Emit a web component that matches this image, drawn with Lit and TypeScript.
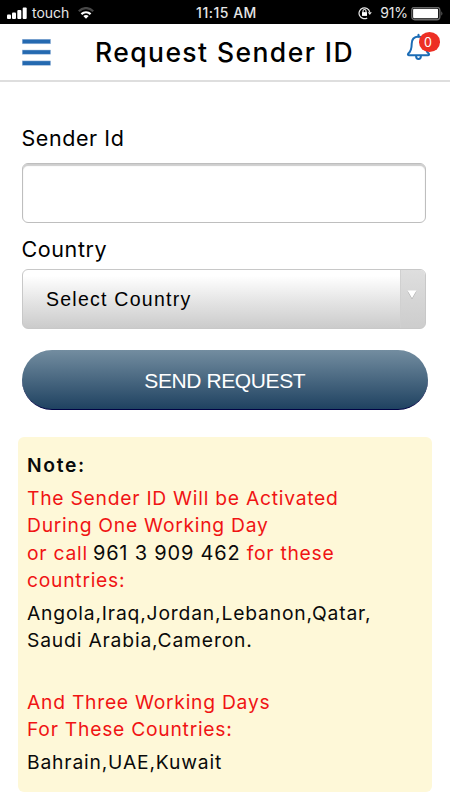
import { LitElement, html, css } from "lit";
import { customElement } from "lit/decorators.js";

@customElement("status-bar")
class StatusBar extends LitElement {
  static styles = css`
    :host { display: grid; grid-template-columns: 1fr auto 1fr; align-items: center; height: 24px; background: #000; color: #e6e6e6;
      font: 14px/24px Inter, "Liberation Sans", sans-serif; box-sizing: border-box; padding: 0 6px 0 7px; white-space: nowrap; }
    .left, .right { display: flex; align-items: center; padding-top: 1px; }
    .right { justify-content: flex-end; }
    .carrier { margin-left: 5px; letter-spacing: 0; padding-bottom: 1px; }
    .wifi { margin-left: 8.5px; }
    .time { font-weight: 500; letter-spacing: 0.5px; font-size: 14px; padding: 0 0 1px 2px; }
    .percent { margin: 0 3px 0 8px; letter-spacing: -0.1px; padding-bottom: 1px; }
    svg { display: block; }
  `;
  render() {
    return html`
      <div class="left">
        <svg width="20" height="13" viewBox="0 0 20 13" fill="#fff">
          <rect x="0" y="7.5" width="4" height="4.5" rx="1" /><rect x="5" y="5.5" width="4" height="6.5" rx="1" />
          <rect x="10.3" y="3" width="4" height="9" rx="1" /><rect x="15.7" y="0.5" width="4" height="11.5" rx="1" />
        </svg>
        <span class="carrier">touch</span>
        <svg class="wifi" width="16" height="13" viewBox="0 0 16 13" fill="none" stroke-width="2.2">
          <path d="M.8 4.2C5 0 11 0 15.2 4.2" stroke="#484848" />
          <path d="M3.4 7.1C6 4.6 10 4.6 12.6 7.1" stroke="#fff" />
          <path d="M5.300 9.100Q8 6.900 10.700 9.100L8 11.800Z" fill="#fff" />
        </svg>
      </div>
      <div class="time">11:15 AM</div>
      <div class="right">
        <svg width="14" height="13" viewBox="0 0 14 13" fill="none" stroke="#e8e8e8" stroke-width="1.2">
          <path d="M9.2 10.9A5.4 5.4 0 1 1 11.7 5" />
          <path d="M9.8 5.2h4l-2 2.8z" fill="#e8e8e8" stroke="none" />
          <rect x="4" y="5.1" width="5" height="3.8" fill="#fff" stroke="none" />
          <path d="M5 5.1V4a1.5 1.5 0 0 1 3 0v1.1" />
        </svg>
        <span class="percent">91%</span>
        <svg width="33" height="14" viewBox="0 0 33 14">
          <rect x=".8" y=".3" width="28" height="12.4" rx="3" fill="none" stroke="#686868" stroke-width="1.4" />
          <rect x="2.1" y="1.7" width="25" height="9.6" rx="1.2" fill="#fff" />
          <path d="M30.400 4.200q2 2.300 0 4.600z" fill="#686868" />
        </svg>
      </div>`;
  }
}

@customElement("page-header")
class PageHeader extends LitElement {
  static styles = css`
    :host { display: flex; align-items: flex-start; height: 58px; box-sizing: border-box; border-bottom: 2px solid #dedede; padding: 0 10px 0 21.5px; }
    .menu { display: block; margin-top: 15px; }
    h1 { margin: 8px 0 0 44.5px; font: 450 26.5px/40px Inter, "Liberation Sans", sans-serif; letter-spacing: 1.42px; white-space: nowrap; color: #000; }
    .alerts { position: relative; margin-left: auto; width: 34px; height: 32px; margin-top: 7px; }
    .bell { display: block; margin-top: 2px; }
    .badge { position: absolute; left: 12.5px; top: 1px; width: 21px; height: 19.5px; border-radius: 50%; background: #ed2f24; color: #fff;
      font: 12.5px/22px Inter, sans-serif; text-align: center; text-indent: -2px; }
  `;
  render() {
    return html`
      <svg class="menu" width="29" height="27" viewBox="0 0 29 27" fill="#2469b0" stroke="#a9c1e0" stroke-width=".5">
        <rect x=".2" y=".2" width="28.4" height="4.6" /><rect x=".2" y="11" width="28.4" height="4.2" /><rect x=".2" y="21.9" width="28.4" height="4.4" />
      </svg>
      <h1>Request Sender ID</h1>
      <div class="alerts">
        <svg class="bell" width="26" height="28" viewBox="0 0 26 28" fill="none" stroke="#1b6cb5" stroke-width="2" stroke-linejoin="round" stroke-linecap="round">
          <path d="M12.5 3.4C8.1 3.6 5.7 6.600 5.700 10.700C5.700 15.700 4.700 18.600 2.300 20.600Q1.300 22.200 2.800 22.300H22.200Q23.700 22.200 22.700 20.600C20.300 18.600 19.300 15.700 19.300 10.700C19.300 6.600 16.900 3.600 12.500 3.400Z" />
          <path d="M12.500 3.400V1.800" /><path d="M10.100 23a2.400 2.900 0 0 0 4.800 0" />
        </svg>
        <span class="badge">0</span>
      </div>`;
  }
}

@customElement("request-form")
class RequestForm extends LitElement {
  static styles = css`
    :host { display: flex; flex-direction: column; padding: 42px 21.5px 0; font-family: Inter, "Liberation Sans", sans-serif; color: #000; }
    label { display: block; font-size: 21.5px; line-height: 28px; white-space: nowrap; }
    .sender { letter-spacing: 0.56px; }
    .country { letter-spacing: 0.6px; margin-top: 12px; }
    .field { box-sizing: border-box; width: 404px; height: 60px; margin-top: 11px; border: 1px solid #bebebe; border-radius: 6px; background: #fff; box-shadow: inset 0 2px 1px #cecece; }
    .select { box-sizing: border-box; display: flex; width: 404px; height: 60px; margin-top: 6px; border: 1px solid #c8c8c8; border-radius: 6px; overflow: hidden;
      background: linear-gradient(#fff 10%, #e4e4e4 55%, #cbcbcb); }
    .value { flex: 1; padding-left: 23.5px; font: 19.5px/58px "Liberation Sans", sans-serif; letter-spacing: 1.25px; }
    .arrow { width: 25px; border-left: 1px solid #d0d0d0; background: linear-gradient(#dedede, #cdcdcd); display: flex; justify-content: center; padding: 19.5px 2px 0 0; box-sizing: border-box; }
    .arrow svg { display: block; }
    button { width: 406.5px; height: 60px; margin-top: 21px; border: 0; border-bottom: 1px solid #000245; border-radius: 30px; padding: 2px 0 0;
      background: linear-gradient(#738da0, #1f4261); color: #fff; font: 21px/57px "Liberation Sans", sans-serif; letter-spacing: -0.4px; }
  `;
  render() {
    return html`
      <label class="sender">Sender Id</label>
      <div class="field"></div>
      <label class="country">Country</label>
      <div class="select">
        <span class="value">Select Country</span>
        <span class="arrow"><svg width="10" height="10" viewBox="0 0 10 10"><path d="M.5 1.600h9L5 9.200z" fill="#aaa" /><path d="M.5.600h9L5 8.200z" fill="#fff" /></svg></span>
      </div>
      <button>SEND REQUEST</button>`;
  }
}

@customElement("activation-note")
class ActivationNote extends LitElement {
  static styles = css`
    :host { display: block; box-sizing: border-box; width: 414px; height: 354.5px; margin: 27px 0 0 18px; padding: 15px 9px 0 9px; border-radius: 6px; background: #fef8d8;
      font: 19.3px/27.5px Inter, "Liberation Sans", sans-serif; letter-spacing: 0.82px; color: #0a0a0a; white-space: nowrap; }
    h2 { margin: 0 0 5px; font: inherit; font-weight: 600; letter-spacing: 1.65px; }
    p { margin: 0 0 5px; }
    .red { color: #f01414; letter-spacing: 0.74px; }
    .gap { margin-bottom: 34px; }
    .phone { color: #0a0a0a; font-size: 20px; line-height: 1; letter-spacing: 0.8px; margin-left: -1px; }
  `;
  render() {
    return html`
      <h2>Note:</h2>
      <p class="red">The Sender ID Will be Activated<br />During One Working Day<br />or call <span class="phone">961 3 909 462</span> for these<br />countries:</p>
      <p class="gap">Angola,Iraq,Jordan,Lebanon,Qatar,<br />Saudi Arabia,Cameron.</p>
      <p class="red">And Three Working Days<br />For These Countries:</p>
      <p>Bahrain,UAE,Kuwait</p>`;
  }
}

@customElement("app-root")
class AppRoot extends LitElement {
  static styles = css`:host { display: block; width: 450px; height: 800px; background: #fff; overflow: hidden; }`;
  render() {
    return html`<status-bar></status-bar><page-header></page-header><request-form></request-form><activation-note></activation-note>`;
  }
}
